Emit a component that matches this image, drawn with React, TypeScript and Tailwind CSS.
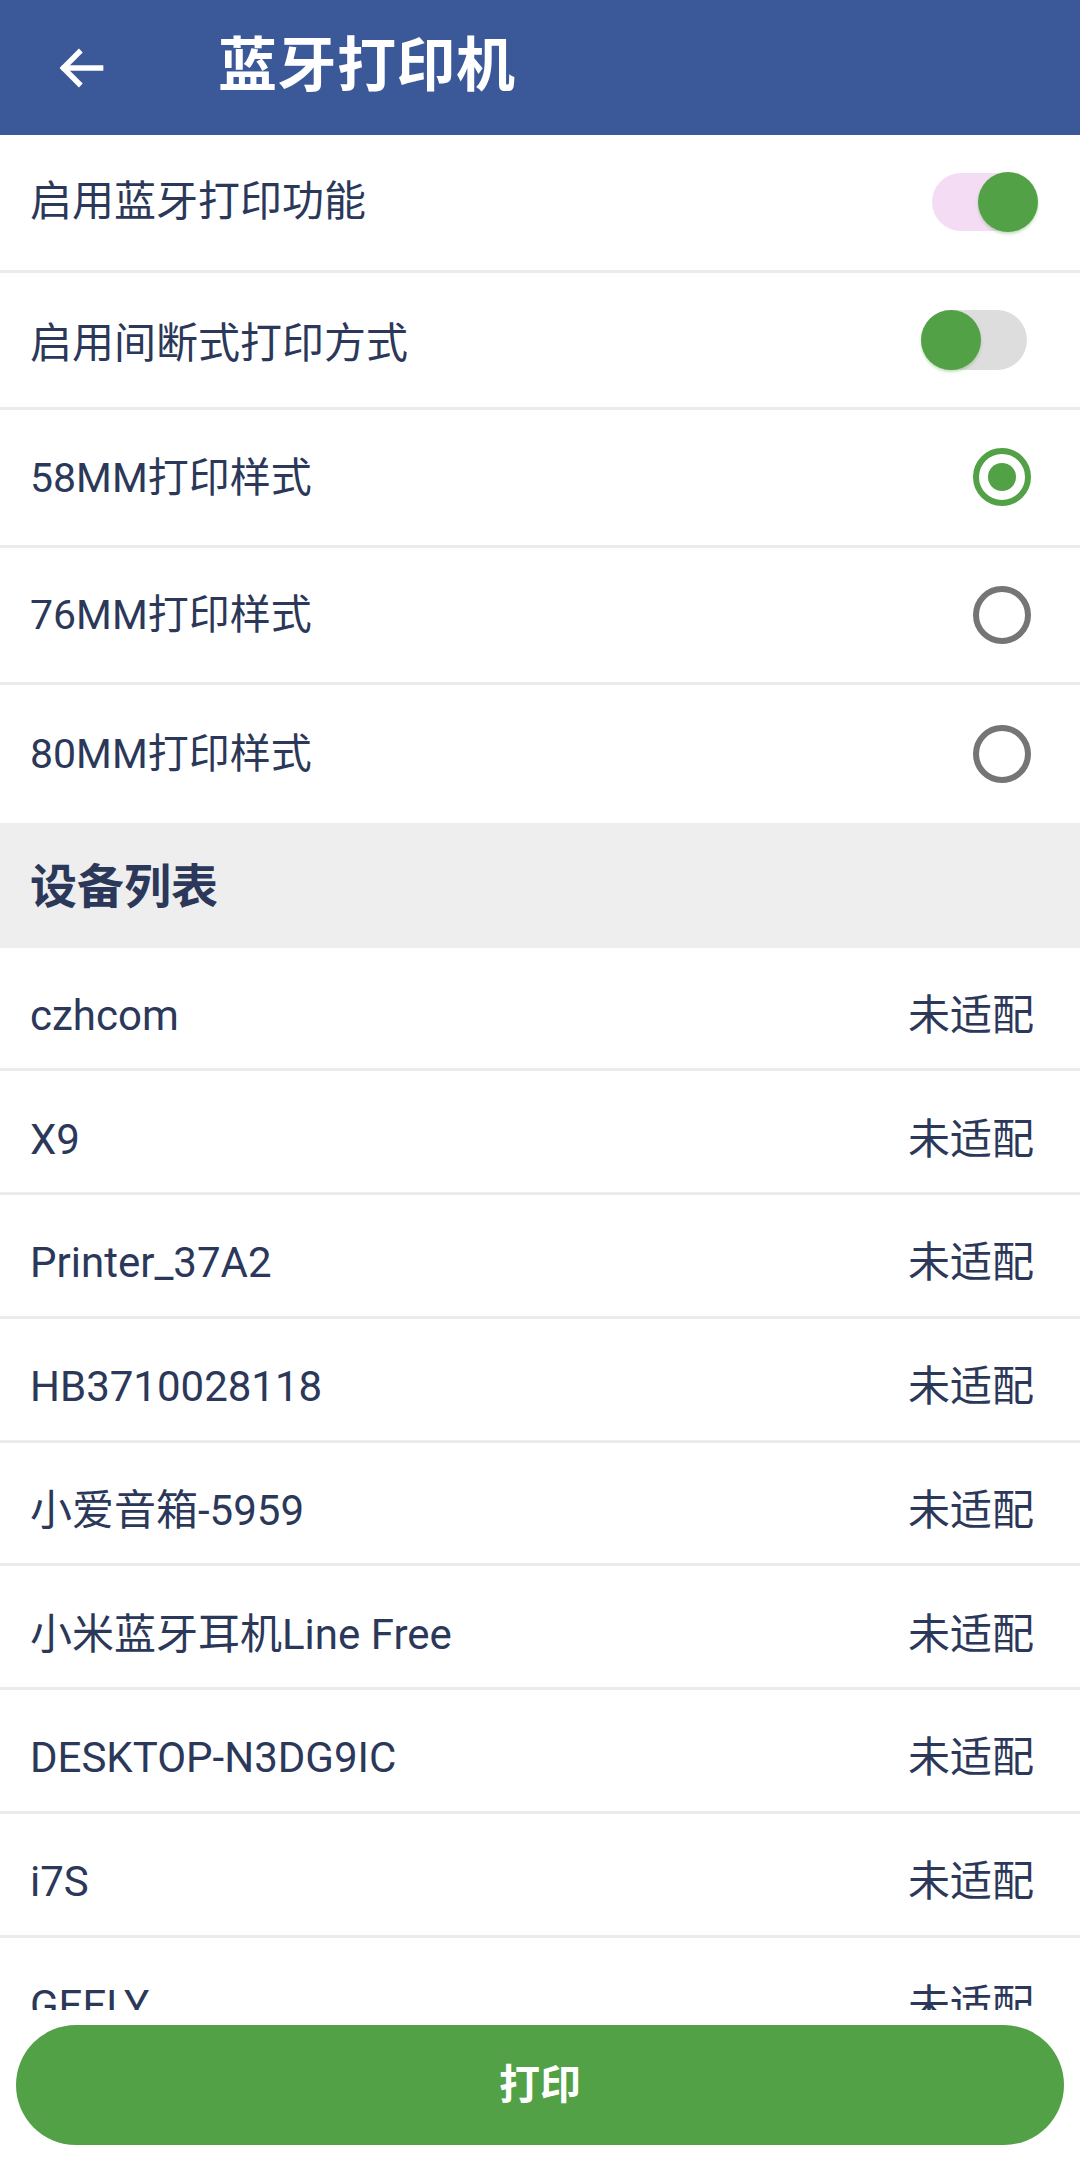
import React from "react";

const NAVY = "text-[#2b3859]";

function Toggle({ on }: { on: boolean }) {
  return (
    <div className="relative w-[106px] h-[60px] flex items-center">
      <div
        className={
          on
            ? "absolute left-0 right-[4px] h-[58px] rounded-full bg-[#f3dcf4]"
            : "absolute left-0 right-0 h-[60px] rounded-full bg-[#dddddd]"
        }
      />
      <div
        className={
          on
            ? "absolute right-0 w-[60px] h-[60px] rounded-full bg-[#52a146] shadow-[0_2px_3px_rgba(82,161,70,0.35)]"
            : "absolute left-0 w-[60px] h-[60px] rounded-full bg-[#52a146] shadow-[0_2px_3px_rgba(82,161,70,0.35)]"
        }
      />
    </div>
  );
}

function Radio({ on }: { on: boolean }) {
  return on ? (
    <div className="w-[58px] h-[58px] rounded-full border-[6px] border-[#52a146] flex items-center justify-center">
      <div className="w-[28px] h-[28px] rounded-full bg-[#52a146]" />
    </div>
  ) : (
    <div className="w-[58px] h-[58px] rounded-full border-[6px] border-[#757575]" />
  );
}

const devices = [
  "czhcom",
  "X9",
  "Printer_37A2",
  "HB3710028118",
  "小爱音箱-5959",
  "小米蓝牙耳机Line Free",
  "DESKTOP-N3DG9IC",
  "i7S",
  "GEELY",
];

export default function App() {
  return (
    <div
      className="w-[1080px] h-[2160px] bg-white flex flex-col overflow-hidden"
      style={{ fontFamily: 'Roboto, "Noto Sans CJK SC", "Noto Sans", sans-serif' }}
    >
      <div className="h-[135px] shrink-0 bg-[#3b5998] flex items-center">
        <div className="w-[218px] shrink-0 flex items-center pl-[54px]">
          <svg width="56" height="56" viewBox="0 0 24 24" fill="none" stroke="white" strokeWidth="2.3" strokeLinecap="square">
            <path d="M20 12H4.5" />
            <path d="M11.5 4.5L4 12l7.5 7.5" strokeLinecap="butt" />
          </svg>
        </div>
        <div className="text-white text-[59px] font-bold leading-none tracking-[0.5px] -mt-[4px]">蓝牙打印机</div>
      </div>

      <div className="flex-1 overflow-hidden flex flex-col">
        <div className="h-[137.5px] shrink-0 border-b-[3px] border-[#ebebeb] flex items-center justify-between pl-[30px] pr-[42px]">
          <span className={`text-[42px] leading-none ${NAVY}`}>启用蓝牙打印功能</span>
          <Toggle on={true} />
        </div>
        <div className="h-[137.5px] shrink-0 border-b-[3px] border-[#ebebeb] flex items-center justify-between pl-[30px] pr-[53px]">
          <span className={`text-[42px] leading-none pt-[8px] ${NAVY}`}>启用间断式打印方式</span>
          <Toggle on={false} />
        </div>
        {["58MM打印样式", "76MM打印样式", "80MM打印样式"].map((t, i) => (
          <div
            key={t}
            className={
              i < 2
                ? "h-[137.5px] shrink-0 border-b-[3px] border-[#ebebeb] flex items-center justify-between pl-[30px] pr-[49px]"
                : "h-[137.5px] shrink-0 flex items-center justify-between pl-[30px] pr-[49px]"
            }
          >
            <span className={`text-[41px] leading-none pt-[2px] ${NAVY}`}>{t}</span>
            <Radio on={i === 0} />
          </div>
        ))}
        <div className="h-[125px] shrink-0 bg-[#eeeeee] flex items-center pl-[30px]">
          <span className={`text-[47px] font-bold leading-none pt-[2px] ${NAVY}`}>设备列表</span>
        </div>
        {devices.map((d) => (
          <div
            key={d}
            className="h-[123.75px] shrink-0 border-b-[3px] border-[#ebebeb] flex items-center justify-between pl-[30px] pr-[46px] pt-[16px]"
          >
            <span className={`text-[42px] leading-none ${NAVY}`}>{d}</span>
            <span className={`text-[42px] leading-none ${NAVY}`}>未适配</span>
          </div>
        ))}
      </div>

      <div className="h-[150px] shrink-0 bg-white px-[16px] py-[15px]">
        <div className="h-full w-full rounded-full bg-[#53a146] flex items-center justify-center">
          <span className="text-white text-[41px] font-bold leading-none">打印</span>
        </div>
      </div>
    </div>
  );
}
